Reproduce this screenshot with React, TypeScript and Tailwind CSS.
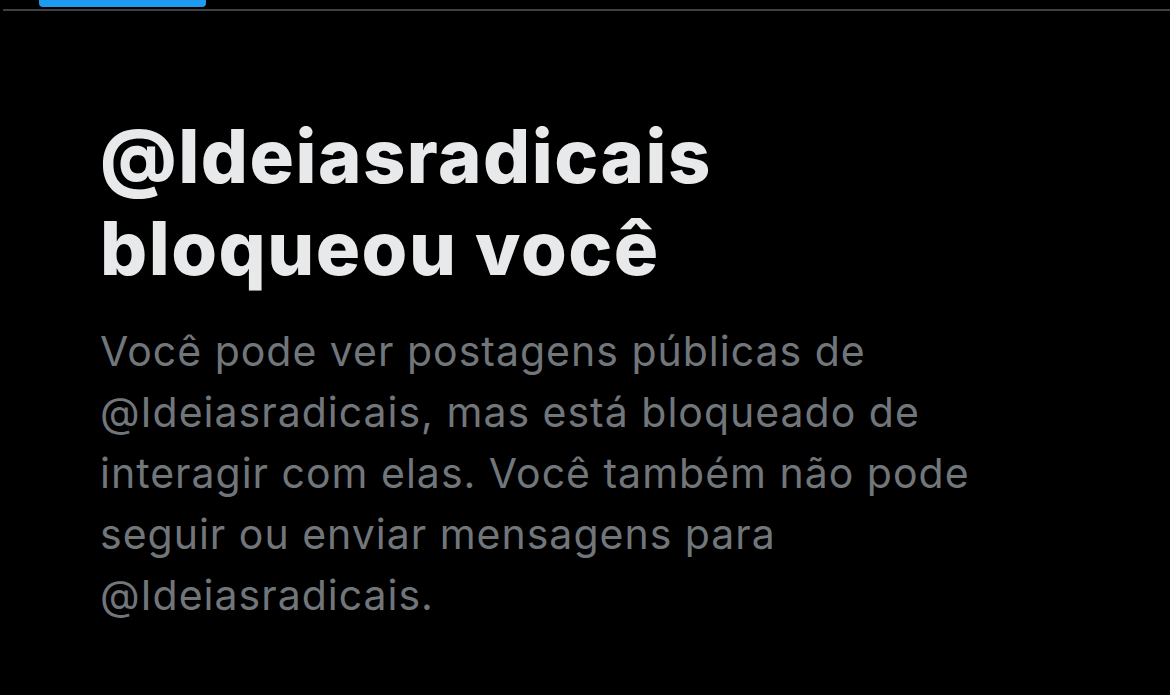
import React from 'react';

const App: React.FC = () => {
  return (
    <div className="min-h-[695px] w-[1170px] bg-black overflow-hidden" style={{ fontFamily: 'Inter, "Noto Sans", sans-serif' }}>
      {/* Tab indicator + divider */}
      <div className="h-[12px] flex flex-col">
        <div className="ml-[39px] w-[167px] h-[7px] rounded-b-[4px] bg-[#1d9bf0]"></div>
        <div className="mt-[2px] ml-[3px] h-[2px] bg-[#3e4145]"></div>
      </div>

      {/* Blocked message */}
      <div className="pl-[100px] pt-[98px] pr-[60px]">
        <h1 className="text-[74px] leading-[92px] font-extrabold text-[#e7e9ea] tracking-[1.5px]">
          @Ideiasradicais
          <br />
          bloqueou você
        </h1>
        <p className="mt-[27px] text-[41px] leading-[61px] text-[#71767b] tracking-[1px]">
          Você pode ver postagens públicas de
          <br />
          @Ideiasradicais, mas está bloqueado de
          <br />
          interagir com elas. Você também não pode
          <br />
          seguir ou enviar mensagens para
          <br />
          @Ideiasradicais.
        </p>
      </div>
    </div>
  );
};

export default App;
